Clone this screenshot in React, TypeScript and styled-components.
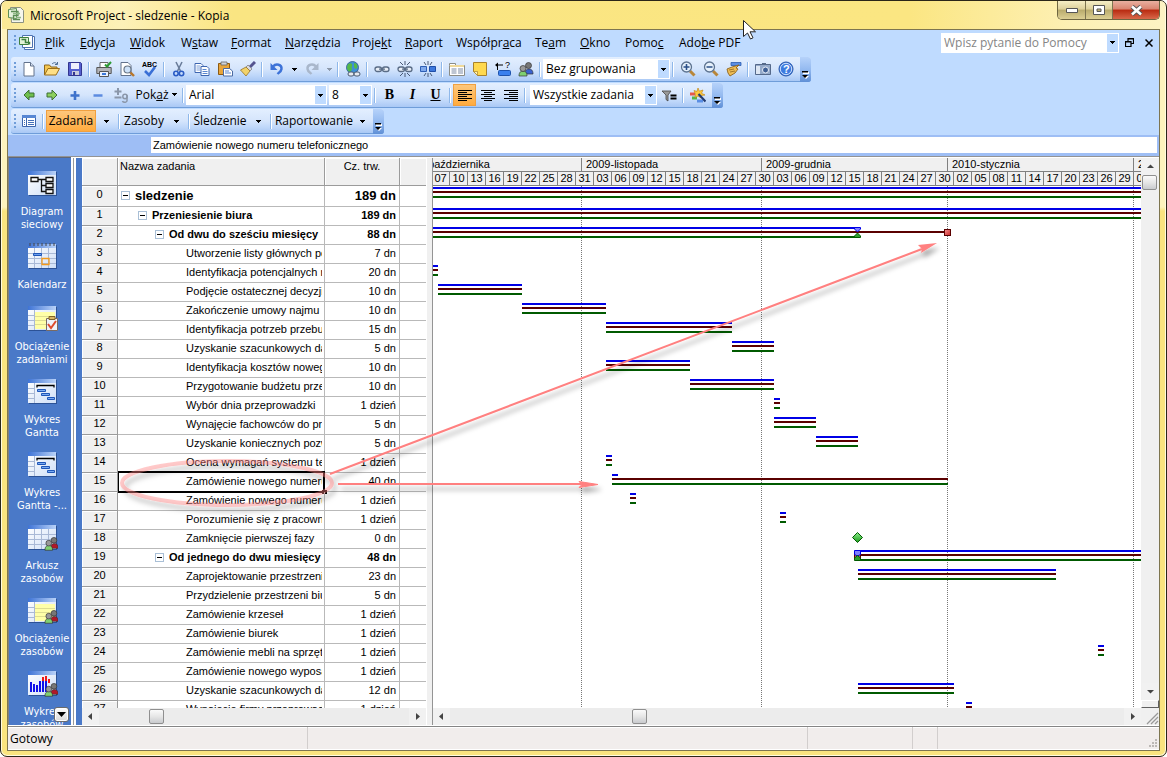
import React from "react";
import styled, { createGlobalStyle, css } from "styled-components";

const uiFont = `"Open Sans", "Noto Sans", sans-serif`;
const gridFont = `"Liberation Sans", Arial, sans-serif`;
const sideFont = `"DejaVu Sans Condensed", "DejaVu Sans", sans-serif`;

const GlobalStyle = createGlobalStyle`
  *, *::before, *::after { box-sizing: border-box; }
  body { margin: 0; background: #fff; font-family: ${uiFont}; font-size: 12px; color: #000; overflow: hidden; }
  button, input, select { font: inherit; color: inherit; margin: 0; padding: 0; border: 0; background: none; border-radius: 0; }
  svg { display: block; }
  u { text-underline-offset: 1px; }
`;

/* ---------- window ---------- */

const Window = styled.div`
  position: relative;
  display: flex;
  flex-direction: column;
  height: 100vh;
  padding: 0 6px 5px;
  border: 1px solid #2b2618;
  border-radius: 7px;
  overflow: hidden;
  background: linear-gradient(#fdf3bd 0, #fdf3bd 206px, #fae47f 210px);
  box-shadow: inset 0 0 0 1px #fffbe0;
`;

const TitleBar = styled.header`
  display: flex;
  flex: none;
  height: 28px;
  margin: 0 -5px;
  padding: 0 5px 0 6px;
  background: linear-gradient(90deg, #fbe995 0, #fdf1b8 120px, #fae582 230px, #fbe682 78%, #fdf0b4 92%, #fdf3c4);
`;

const WindowTitle = styled.h1`
  display: flex;
  align-items: center;
  gap: 6px;
  margin: 0;
  flex: 1;
  font-size: 12px;
  font-weight: 400;
  white-space: nowrap;
`;

const CaptionButtons = styled.div`
  display: flex;
  height: 19px;
  border: 1px solid #6f6640;
  border-top: 0;
  border-radius: 0 0 5px 5px;
  overflow: hidden;
`;

const CaptionButton = styled.button<{ $close?: boolean }>`
  display: flex;
  align-items: center;
  justify-content: center;
  width: ${(p) => (p.$close ? 47 : 27)}px;
  background: ${(p) =>
    p.$close
      ? "linear-gradient(#e9b0a0 0, #d98470 45%, #b92a10 50%, #d8684a)"
      : "linear-gradient(#f6eec6 0, #ddd09a 45%, #b9ab6c 50%, #dccf94)"};
  & + & { border-left: 1px solid #7d7450; }
`;

const Client = styled.div`
  display: flex;
  flex: 1;
  min-height: 0;
  flex-direction: column;
  border: 1px solid #7d7550;
  background: #bfdbff;
`;

/* ---------- menu and toolbars ---------- */

const MenuBar = styled.nav`
  display: flex;
  flex: none;
  align-items: center;
  height: 27px;
  padding: 0 0 2px 3px;
`;

const MenuIcon = styled.span`
  margin: 0 5px 0 2px;
`;

const MenuButton = styled.button<{ $w: number }>`
  width: ${(p) => p.$w}px;
  padding-left: 4px;
  text-align: left;
  white-space: nowrap;
`;

const HelpBox = styled.div`
  display: flex;
  width: 178px;
  height: 20px;
  margin-left: auto;
  border: 1px solid #fff;
  background: #fff;
`;

const HelpInput = styled.input`
  flex: 1;
  min-width: 0;
  padding-left: 2px;
  outline: none;
  &::placeholder { color: #858585; opacity: 1; }
`;

const HelpDrop = styled.button`
  display: flex;
  align-items: center;
  justify-content: center;
  width: 11px;
  background: #bfdbff;
`;

const DocButton = styled.button`
  display: flex;
  justify-content: center;
  width: 20px;
`;

const ToolRow = styled.div`
  display: flex;
  flex: none;
  height: 26px;
  padding-left: 3px;
`;

const Toolbar = styled.div`
  display: flex;
  align-items: center;
  height: 25px;
  border-radius: 3px;
  border-bottom: 1px solid #6f9dd9;
  background: linear-gradient(#e3efff 0, #d5e5fc 50%, #c0d8fa 75%, #a9c8f5);
`;

const Grip = styled.span`
  width: 6px;
  height: 15px;
  flex: none;
  background: linear-gradient(#6f9dd9 2px, transparent 2px) 3px 0 / 2px 4px repeat-y;
`;

const ToolButton = styled.button<{ $on?: boolean }>`
  display: flex;
  flex: none;
  align-items: center;
  justify-content: center;
  width: 23px;
  height: 22px;
  ${(p) => p.$on && css`
    border: 1px solid #f0a040;
    background: linear-gradient(#fdc77c, #ffab3f);
  `}
`;

const FormatTool = styled(ToolButton)`
  font-family: "Liberation Serif", serif;
  font-size: 14px;
  font-weight: 700;
`;

const TextTool = styled(ToolButton)<{ $w: number }>`
  width: ${(p) => p.$w}px;
  gap: 3px;
  padding-bottom: 1px;
  white-space: nowrap;
`;

const DropButton = styled(ToolButton)<{ $w?: number }>`
  width: ${(p) => p.$w ?? 12}px;
`;

const Sep = styled.span`
  flex: none;
  width: 6px;
  height: 15px;
  background: linear-gradient(90deg, transparent 2px, #8fb8ea 2px, #8fb8ea 3px, #fff 3px, #fff 4px, transparent 4px);
`;

const SelectWrap = styled.label<{ $w: number; $gap?: boolean }>`
  display: flex;
  position: relative;
  flex: none;
  width: ${(p) => p.$w}px;
  height: 20px;
  margin-left: ${(p) => (p.$gap ? 2 : 0)}px;
  border: 1px solid #fff;
  background: linear-gradient(90deg, #fff calc(100% - 11px), #bfdbff 0);
  select {
    width: 100%;
    padding: 0 12px 2px 2px;
    appearance: none;
    outline: none;
  }
  svg { position: absolute; right: 3px; top: 8px; pointer-events: none; }
`;

const MoreButton = styled.button`
  display: flex;
  align-items: flex-end;
  justify-content: center;
  align-self: stretch;
  width: 11px;
  height: 25px;
  margin-left: 3px;
  padding-bottom: 3px;
  border-radius: 0 3px 3px 0;
  background: linear-gradient(#b6d2fa, #94baf0 50%, #5f8fd6);
`;

const EntryBar = styled.div`
  display: flex;
  flex: none;
  height: 21px;
  padding: 2px 2px 3px 143px;
  background: #9ebef5;
`;

const EntryInput = styled.input`
  flex: 1;
  padding-left: 2px;
  outline: none;
  background: #fff;
  font-family: ${gridFont};
  font-size: 11px;
`;

/* ---------- body ---------- */

const Body = styled.main`
  display: flex;
  flex: 1;
  min-height: 0;
  border-top: 1px solid #949494;
  border-bottom: 1px solid #fff;
  background: #fff;
  padding-top: 1px;
`;

const Sidebar = styled.aside`
  position: relative;
  flex: none;
  width: 63px;
  margin-top: -1px;
  padding-top: 12px;
  overflow: hidden;
  border-left: 1px solid #808080;
  border-top: 1px solid #606878;
  background: #4a79c8;
`;

const ViewButton = styled.button`
  display: flex;
  flex-direction: column;
  align-items: center;
  gap: 8px;
  width: 66px;
  min-height: 62px;
  padding-bottom: 12px;
  color: #fff;
  font-family: ${sideFont};
  font-size: 11px;
  line-height: 13px;
  white-space: pre;
`;

const SidebarMore = styled.button`
  position: absolute;
  right: 2px;
  bottom: 3px;
  display: flex;
  align-items: center;
  justify-content: center;
  width: 15px;
  height: 15px;
  border: 1px solid #6b6b6b;
  border-radius: 3px;
  background: linear-gradient(#fff, #d9d9d9);
  box-shadow: inset 0 0 0 1px #fff;
`;

const Divider = styled.div`
  flex: none;
  width: 11px;
  background: linear-gradient(90deg, #fff 2px, #9a9a9a 2px, #9a9a9a 3px, #fff 3px, #fff 5px, #4a79c8 5px);
`;

const SheetPane = styled.section`
  display: flex;
  flex: none;
  flex-direction: column;
  width: 344px;
`;

const Clip = styled.div`
  flex: 1;
  min-height: 0;
  overflow: hidden;
`;

const Sheet = styled.table`
  width: 100%;
  table-layout: fixed;
  border-collapse: separate;
  border-spacing: 0;
  font-family: ${gridFont};
  font-size: 11px;
  line-height: 13px;
`;

const HeadCell = styled.th`
  height: 28px;
  padding: 2px 2px 0;
  vertical-align: top;
  font-weight: 400;
  border-right: 1px solid #9b9b9b;
  border-bottom: 1px solid #9b9b9b;
  background: #f0f0f0;
  box-shadow: inset 1px 1px 0 #fff;
  text-align: center;
  &:nth-child(2) { text-align: left; }
  &:last-child { border-right: 0; }
`;

const NumCell = styled.th`
  padding: 0 0 3px;
  font-weight: 400;
  border-right: 1px solid #9b9b9b;
  border-bottom: 1px solid #9b9b9b;
  background: #f0f0f0;
  box-shadow: inset 1px 1px 0 #fff;
`;

const Cell = styled.td`
  padding: 0 3px 1px 0;
  border-right: 1px solid #b9b9b9;
  border-bottom: 1px solid #b9b9b9;
  text-align: right;
  white-space: nowrap;
  &:last-child { border-right: 0; }
`;

const NameCell = styled(Cell)<{ $selected?: boolean }>`
  position: relative;
  padding: 0 2px 1px 0;
  text-align: left;
  ${(p) => p.$selected && css`
    &::before {
      content: "";
      position: absolute;
      inset: -2px -1px -2px 0;
      border: 2px solid #000;
      border-left-width: 1px;
    }
    &::after {
      content: "";
      position: absolute;
      right: -3px;
      bottom: -3px;
      width: 5px;
      height: 4px;
      background: #000;
    }
  `}
`;

const Row = styled.tr<{ $level: number }>`
  height: ${(p) => (p.$level === 0 ? 21 : 19)}px;
  ${Cell} {
    font-weight: ${(p) => (p.$level < 3 ? 700 : 400)};
    font-size: ${(p) => (p.$level === 0 ? 13 : 11)}px;
  }
`;

const Name = styled.div<{ $level: number }>`
  display: flex;
  align-items: center;
  gap: 5px;
  overflow: hidden;
  padding-left: ${(p) => (p.$level === 3 ? 68 : 3 + 17 * p.$level)}px;
`;

const Collapse = styled.button`
  flex: none;
  width: 9px;
  height: 9px;
  border: 1px solid #a9bfd6;
  background: linear-gradient(#000, #000) center / 5px 1px no-repeat #fff;
`;

const PaneGap = styled.div`
  flex: none;
  width: 7px;
  border-left: 1px solid #fff;
  border-right: 1px solid #949494;
  background: #f0f0f0;
`;

const GanttPane = styled.section`
  display: flex;
  flex: 1;
  min-width: 0;
  flex-direction: column;
`;

const ScaleRow = styled.div`
  display: flex;
  flex: none;
  height: 14px;
  overflow: hidden;
  border-bottom: 1px solid #808080;
  background: #f0f0f0;
  font-family: ${gridFont};
  font-size: 11px;
  line-height: 13px;
`;

const Month = styled.span<{ $w: number; $first?: boolean }>`
  flex: none;
  width: ${(p) => p.$w}px;
  padding-left: 4px;
  margin-left: ${(p) => (p.$first ? -37 : 0)}px;
  border-right: 1px solid #808080;
  white-space: nowrap;
`;

const Day = styled.span`
  flex: none;
  width: 18px;
  text-align: center;
  border-right: 1px solid #808080;
  &:first-child { margin-left: -1px; }
`;

const Chart = styled.svg`
  width: 100%;
  height: 100%;
`;

const HScroll = styled.div`
  display: flex;
  flex: none;
  align-items: center;
  height: 17px;
  background: #ececec;
`;

const ScrollArrow = styled.button`
  display: flex;
  flex: none;
  align-items: center;
  justify-content: center;
  width: 17px;
  height: 17px;
  background: #f1f1f1;
`;

const Thumb = styled.span<{ $x?: number }>`
  flex: none;
  width: 15px;
  height: 15px;
  margin: 0 auto 0 ${(p) => p.$x ?? 0}px;
  border: 1px solid #8f8f8f;
  border-radius: 2px;
  background: linear-gradient(#fafafa, #e6e6e6 50%, #c9cbce);
`;

const VScroll = styled.div`
  display: flex;
  flex: none;
  flex-direction: column;
  width: 18px;
  padding-left: 1px;
  background: #f0f0f0;
`;

const VFill = styled.span`
  flex: 1;
`;

const SplitBox = styled.span`
  height: 8px;
  margin-left: -1px;
  border: 1px solid #fff;
  border-right-color: #606060;
  border-bottom-color: #606060;
  background: #f0f0f0;
`;

const Corner = styled.span`
  display: flex;
  align-items: flex-end;
  justify-content: flex-end;
  height: 17px;
`;

const StatusBar = styled.footer`
  display: flex;
  flex: none;
  height: 24px;
  border-top: 1px solid #858585;
  border-bottom: 1px solid #fff;
  background: #f1edec;
  box-shadow: inset 0 1px 0 #fff;
`;

const StatusCell = styled.span<{ $w?: number }>`
  flex: ${(p) => (p.$w ? `0 0 ${p.$w}px` : 1)};
  padding: 3px 0 0 2px;
  border-right: 1px solid #d2cecd;
  &:last-child { border: 0; display: flex; justify-content: flex-end; align-items: flex-end; padding: 0 1px 1px 0; }
`;

const Annotations = styled.svg`
  position: absolute;
  left: -1px;
  top: -1px;
  width: 100%;
  height: 100%;
  pointer-events: none;
`;

/* ---------- small drawings ---------- */

const Caret = ({ c = "#000" }: { c?: string }) => (
  <svg width="5" height="3" shapeRendering="crispEdges"><path d="M0 0h5v1H4v1H3v1H2V2H1V1H0z" fill={c} /></svg>
);

const MoreMark = () => (
  <svg width="7" height="8">
    <path d="M1 1h6v2H1zM1 5h6L4 8z" fill="#fff" />
    <path d="M0 0h6v1.500H0zM0 4h6L3 7z" fill="#000" />
  </svg>
);

const ArrowMark = ({ d }: { d: "left" | "right" | "up" | "down" }) => {
  const paths = { left: "M6 1v7L2 4.500z", right: "M3 1v7l4-3.500z", up: "M1 6h7L4.500 2.500z", down: "M1 3h7L4.500 6.500z" };
  return <svg width="9" height="9"><path d={paths[d]} fill="#444" /></svg>;
};

const Icon = ({ children, w = 16 }: { children: React.ReactNode; w?: number }) => (
  <svg width={w} height="16" viewBox={`0 0 ${w} 16`}>{children}</svg>
);

const People = ({ red }: { red?: boolean }) => (
  <g stroke="#333" strokeWidth=".7">
    <path d="M7 13c0-4 2-5 4-5s4 1 4 5z" fill={red ? "#b01828" : "#3a62d0"} />
    <circle cx="10.500" cy="4.500" r="3" fill="#777" />
    <path d="M1 15c0-4 2-5 4-5s4 1 4 5z" fill="#7fd070" />
    <circle cx="5" cy="7.500" r="3" fill="#999" />
  </g>
);

const Chain = () => (
  <g fill="none" stroke="#5a6c86" strokeWidth="1.300">
    <rect x="1" y="6" width="6.500" height="4.500" rx="2.200" fill="#e8eef7" />
    <rect x="8.500" y="6" width="6.500" height="4.500" rx="2.200" fill="#e8eef7" />
    <path d="M5 8.200h6" />
  </g>
);

const Lens = ({ plus }: { plus?: boolean }) => (
  <g>
    <path d="M10 10l4.500 4.500" stroke="#b8863a" strokeWidth="3" />
    <circle cx="6.500" cy="6" r="5" fill="#e6f1fc" stroke="#5d7390" strokeWidth="1.300" />
    <path d={plus ? "M3.500 6h6M6.500 3v6" : "M3.500 6h6"} stroke="#2b4f88" strokeWidth="1.600" />
  </g>
);

const ic: Record<string, React.ReactNode> = {
  new: <Icon><path d="M3 1.500h6.500l3.500 3.500v10H3z" fill="#fff" stroke="#62728c" /><path d="M9.500 1.500V5H13" fill="#d7e2f2" stroke="#62728c" /></Icon>,
  open: <Icon><path d="M.5 14V4h5l1.500 2h6v3" fill="#f4c650" stroke="#8e671c" /><path d="M.5 14L4 7.500h11.500L12 14z" fill="#ffdf85" stroke="#9a6d18" /><path d="M8 3c2-2 4-1.500 5 0m.5-2v2.500H11" fill="none" stroke="#4d6c94" /></Icon>,
  save: <Icon><path d="M1.500 1.500h12l1 1v12h-13z" fill="#5560cf" stroke="#33358f" /><path d="M4 2h8v6H4z" fill="#eef0fc" /><path d="M5 10h7v4H5z" fill="#c9ccdb" /><path d="M6 11h2v3H6z" fill="#33358f" /></Icon>,
  print: <Icon><path d="M4 6V1.500h8V6" fill="#fff" stroke="#666" /><path d="M.8 6.500h14.400v6H.8z" fill="#b4b5ba" stroke="#555" /><path d="M3.500 10.500h9v5h-9z" fill="#e9f1ff" stroke="#555" /><path d="M9 3.500l2 2 4-4.500" fill="none" stroke="#2d9b34" strokeWidth="2" /><path d="M6 13h4" stroke="#3c78d8" strokeWidth="2" /></Icon>,
  preview: <Icon><path d="M2 1.500h7l3 3v10H2z" fill="#fff" stroke="#62728c" /><path d="M11 11l4 4" stroke="#b8762a" strokeWidth="2.400" /><circle cx="8.500" cy="8.500" r="3.500" fill="#cfe3fa" stroke="#6b7787" strokeWidth="1.200" /></Icon>,
  spell: <Icon w={18}><text x="1" y="6" fontSize="7" fontWeight="700" fontFamily="Liberation Sans">ABC</text><path d="M4 10l4 4 6-8" fill="none" stroke="#3a6fd6" strokeWidth="2.600" /></Icon>,
  cut: <Icon><path d="M5 1l4.500 9M11 1L6.500 10" stroke="#6c7f9c" strokeWidth="1.600" /><circle cx="5" cy="12.500" r="2.200" fill="none" stroke="#2b5cc4" strokeWidth="1.600" /><circle cx="10.500" cy="12.500" r="2.200" fill="none" stroke="#2b5cc4" strokeWidth="1.600" /></Icon>,
  copy: <Icon><path d="M1 2.500h6l2 2v7H1z" fill="#fff" stroke="#3e66b0" /><path d="M2.500 5h4M2.500 7h4M2.500 9h4" stroke="#7fa0d8" /><path d="M7 5.500h6l2 2v7H7z" fill="#fff" stroke="#3e66b0" /><path d="M8.500 8.500h4M8.500 10.500h5M8.500 12.500h5" stroke="#5a86d0" /></Icon>,
  paste: <Icon><path d="M1.500 2.500h11v11h-11z" fill="#e9a53a" stroke="#8d5b12" /><path d="M4 1h6v3H4z" fill="#cfd3da" stroke="#666" strokeWidth=".8" /><path d="M6.500 7.500h6l3 2.500v5h-9z" fill="#fff" stroke="#4c6ba3" /><path d="M8 10h4M8 12h6" stroke="#5a86d0" /></Icon>,
  brush: <Icon><path d="M15 1l-5 5" stroke="#54538f" strokeWidth="3" /><path d="M8 4l4 4-2 2-4-4z" fill="#d9d9df" stroke="#777" strokeWidth=".7" /><path d="M6 6l4 4-4 5L.5 9z" fill="#f2d269" stroke="#97752a" strokeWidth=".8" /></Icon>,
  undo: <Icon><path d="M4 5.500c3-3.500 9-2 8.500 2.500-.3 2.500-2.500 3.500-4 5" fill="none" stroke="#3c72d8" strokeWidth="2.400" /><path d="M1.500 2v7h7z" fill="#3c72d8" /></Icon>,
  redo: <Icon><path d="M12 5.500C9 2 3 3.500 3.500 8c.3 2.500 2.500 3.500 4 5" fill="none" stroke="#a9b7cb" strokeWidth="2.400" /><path d="M14.500 2v7h-7z" fill="#a9b7cb" /></Icon>,
  globe: <Icon><circle cx="7.500" cy="6.500" r="6" fill="#3e8fd4" stroke="#28548c" strokeWidth=".8" /><path d="M3 3c3-2 5 0 4 2s1 3-1 5-4-1-4-4zM9 2c3 0 4 3 3 5s-3 0-3-2z" fill="#54b948" /><g fill="#e4e9f0" stroke="#4c5b70"><rect x="3" y="11" width="6" height="4" rx="2" /><rect x="9" y="11" width="6" height="4" rx="2" /></g></Icon>,
  link: <Icon><Chain /></Icon>,
  unlink: <Icon><Chain /><path d="M8 0v4M3 1l3 3M13 1l-3 3M8 16v-4M3 15l3-3M13 15l-3-3" stroke="#3a4a66" strokeWidth=".9" /></Icon>,
  split: <Icon><path d="M.5 5.500h6v5h-6z" fill="#7fa9ec" stroke="#2f5fb5" /><path d="M9.500 5.500h6v5h-6z" fill="#3d78dc" stroke="#1f4ea8" /><path d="M8 0v4M4 1l2 3M12 1l-2 3M8 16v-4M4 15l2-3M12 15l-2-3" stroke="#3a4a66" strokeWidth=".9" /></Icon>,
  info: <Icon><path d="M.5 4.500v-2h6v2h9v10H.5z" fill="#fff" stroke="#8b8c86" /><path d="M1 4h14v2H1z" fill="#efd99a" /><path d="M2.500 8h5M2.500 10h5M2.500 12h5M9 8h5M9 10h5M9 12h5" stroke="#7c8ba5" /></Icon>,
  note: <Icon><path d="M1.500 1.500h13v13h-9l-4-4z" fill="#ffd94f" stroke="#a8822c" /><path d="M1.500 10.500l4 4v-4z" fill="#fff3b0" stroke="#a8822c" strokeWidth=".7" /></Icon>,
  assign: <Icon><path d="M3 4h5" stroke="#000" /><path d="M0 4l3-2.500v5z" /><path d="M2.500 4v5" stroke="#000" /><text x="10" y="7" fontSize="9" fontFamily="Liberation Sans">?</text><rect x="3.500" y="9.500" width="12" height="5" rx="1" fill="#3b80ee" stroke="#1f53ad" /></Icon>,
  people: <Icon><People /></Icon>,
  zoomIn: <Icon><Lens plus /></Icon>,
  zoomOut: <Icon><Lens /></Icon>,
  goto: <Icon><path d="M5 1.500h10v3H5z" fill="#5a8ee4" stroke="#2a5cae" strokeWidth=".8" /><path d="M1 8l5-2 7-2-3 3 2 1-3 4-5 3-2-3z" fill="#eebd54" stroke="#8f6420" strokeWidth=".9" /><path d="M3 9l5-1M4 11l5-1" stroke="#8f6420" strokeWidth=".8" /></Icon>,
  camera: <Icon><path d="M.5 3.500h15v10H.5z" fill="#94a9c9" stroke="#55698a" /><path d="M1 5h4v8H1z" fill="#dde6f3" /><circle cx="10.500" cy="9" r="3" fill="#3f5f94" stroke="#e8eef8" /><path d="M7 2h4v2H7z" fill="#55698a" /></Icon>,
  help: <Icon><circle cx="8" cy="8" r="7" fill="#3d7be0" stroke="#2a58ab" /><circle cx="8" cy="8" r="5.700" fill="none" stroke="#cfe0fb" /><text x="5" y="12" fontSize="11" fontWeight="700" fill="#fff" fontFamily="Liberation Sans">?</text></Icon>,
  left: <Icon><path d="M8 3L3 8l5 5v-3h5V6H8z" fill="#6fbf4d" stroke="#3d6f34" /></Icon>,
  right: <Icon><path d="M8 3l5 5-5 5v-3H3V6h5z" fill="#8ccf5e" stroke="#3d6f34" /></Icon>,
  plus: <Icon><path d="M8 4v9M3.500 8.500h9" stroke="#3e72cb" strokeWidth="2.600" /></Icon>,
  minus: <Icon><path d="M3.500 8.500h9" stroke="#5c8be0" strokeWidth="2.600" /></Icon>,
  sub: <Icon><path d="M5 1v7M1.500 4.500h7M1.500 10.500h7" stroke="#8b97aa" strokeWidth="2" /><circle cx="12" cy="9.500" r="2.200" fill="none" stroke="#8b97aa" strokeWidth="1.500" /><path d="M14 8v6c-1 2-4 1.500-4.500 0" fill="none" stroke="#8b97aa" strokeWidth="1.500" /></Icon>,
  alignL: <Icon><path d="M1 3.500h14M1 5.500h9M1 7.500h14M1 9.500h9M1 11.500h14M1 13.500h9" stroke="#000" /></Icon>,
  alignC: <Icon><path d="M1 3.500h14M4 5.500h8M1 7.500h14M4 9.500h8M1 11.500h14M4 13.500h8" stroke="#000" /></Icon>,
  alignR: <Icon><path d="M1 3.500h14M6 5.500h9M1 7.500h14M6 9.500h9M1 11.500h14M6 13.500h9" stroke="#000" /></Icon>,
  filter: <Icon><path d="M1 4h9L7 8v6l-2-1.500V8z" fill="#999" stroke="#444" strokeWidth=".8" /><path d="M9.500 8.500h6M9.500 11.500h6" stroke="#000" strokeWidth="1.800" /></Icon>,
  wizard: <Icon><path d="M0 5.500h5v3H0z" fill="#e65a4b" /><path d="M2 9.500h5v3H2z" fill="#55b54b" /><path d="M7 12.500h6v3H7z" fill="#5a8ee4" /><path d="M8 1l1.300 3.200L13 3l-1.500 3.300L15 8l-3.700.500L11 11 8 9l-3 1.500.500-3L4 3.500l3 1z" fill="#ffc93c" stroke="#c58b1a" strokeWidth=".7" /><path d="M8.500 7l7 7.500" stroke="#223a70" strokeWidth="2.200" /></Icon>,
  views: <Icon><path d="M1.500 2.500h13v11h-13z" fill="#fff" stroke="#3d66ad" /><path d="M1 2h14v3H1z" fill="#5787d4" /><path d="M5.500 5v8" stroke="#3d66ad" /><path d="M3 7.500h1M3 9.500h1M3 11.500h1M7 7.500h6M7 9.500h6M7 11.500h6" stroke="#4470b8" /></Icon>,
};

const ProjectLogo = () => (
  <svg width="16" height="16">
    <path d="M2.500.5h10l3 3v12h-12z" fill="#f6f6ee" stroke="#8b9180" />
    <path d="M.5 2.500l8-1v10l-8-1z" fill="#e6f2dc" stroke="#5f8f55" />
    <path d="M3 4.500h7v4H5.500v4H12" fill="none" stroke="#5c8c52" strokeWidth="1.300" />
    <path d="M5 6.500h7M8 10.500h5" stroke="#8fb884" strokeWidth="1.300" />
  </svg>
);

const DocLogo = () => (
  <svg width="17" height="17">
    <path d="M5.500 2.500h10v13h-10z" fill="#fff" stroke="#4d72b0" />
    <path d="M3.500 1.500h10v12h-10z" fill="#fff" stroke="#4d72b0" />
    <path d="M.5 3.500h9v7h-9z" fill="#e2f2d8" stroke="#3f8040" />
    <path d="M2.500 5.500h4v3h4v2" fill="none" stroke="#3f8040" strokeWidth="1.500" />
  </svg>
);

type ViewKind = "network" | "calendar" | "taskUsage" | "gantt" | "sheet" | "resUsage" | "graph";

const ViewIcon = ({ kind }: { kind: ViewKind }) => {
  const grid = kind === "calendar" || kind === "sheet";
  const usage = kind === "taskUsage" || kind === "resUsage";
  return (
    <svg width="32" height="27" viewBox="-1 0 32 27">
      <defs>
        <linearGradient id="cap"><stop stopColor="#3f74d6" /><stop offset="1" stopColor="#b9d2f8" /></linearGradient>
        <linearGradient id="page" x2="1" y2="1"><stop stopColor="#fff" /><stop offset="1" stopColor="#cfdff7" /></linearGradient>
      </defs>
      <path d="M2 2h28v24H2z" fill="#2c5296" />
      <path d="M1 1h28v24H1z" fill="url(#page)" />
      <path d="M1 1h28v4H1z" fill="url(#cap)" />
      {kind === "network" && (
        <g fill="#fff" stroke="#111" strokeWidth="1.300">
          <path d="M11 9.500h8M14.500 9.500v12H19M14.500 15.500H19" fill="none" />
          <path d="M4 7.500h7v4H4zM19 7.500h7v4h-7zM19 13.500h7v4h-7zM19 19.500h7v4h-7z" />
        </g>
      )}
      {grid && <path d="M1 10.500h28M1 15.500h28M1 20.500h28M7.500 5v20M14.500 5v20M21.500 5v20" stroke="#a9b9d6" />}
      {(usage || kind === "gantt") && <path d="M7.500 5v20M1 10.500h6M1 15.500h6M1 20.500h6" stroke="#a9b9d6" />}
      {usage && <path d="M8 7h20v17H8z" fill="#ffffa8" />}
      {usage && <path d="M8 11.500h20M8 15.500h20M8 19.500h20" stroke="#dedd92" />}
      {kind === "calendar" && (
        <g fill="none">
          <path d="M3 0v3M7 0v3M11 0v3M15 0v3M19 0v3M23 0v3M27 0v3" stroke="#444" />
          <path d="M6.500 10.500h8v2h-8z" fill="#6ca0ee" stroke="#1f56b8" />
          <path d="M15 15.500h7v6h-7z" stroke="#f49a1c" strokeWidth="1.300" />
        </g>
      )}
      {kind === "gantt" && (
        <g>
          <path d="M10 9.500V7.500h17v2" fill="none" stroke="#000" strokeWidth="1.300" />
          <path d="M10.500 11.500h8v2h-8zM14.500 15.500h8v2h-8zM20.500 19.500h7v2h-7z" fill="#7aabf2" stroke="#1f56b8" />
        </g>
      )}
      {kind === "graph" && (
        <g>
          <path d="M3 12h2v10H3zM6 14h2v8H6zM9 15h2v7H9zM12 11h2v11h-2zM15 10h2v12h-2zM18 10h2v12h-2z" fill="#1010e8" />
          <path d="M15 7h2v4h-2zM18 6h2v5h-2zM21 9h2v4h-2z" fill="#f01818" />
        </g>
      )}
      {kind === "taskUsage" && (
        <g>
          <path d="M19.500 13.500h11v12h-11z" fill="#eef2fa" stroke="#7a6a62" />
          <path d="M22 11.500h6v3h-6z" fill="#d9b765" stroke="#806425" />
          <path d="M21 19l3 4 5-7" fill="none" stroke="#dd4a2d" strokeWidth="2" />
        </g>
      )}
      {(kind === "sheet" || kind === "resUsage" || kind === "graph") && (
        <g transform="translate(17 12) scale(.95)"><People red /></g>
      )}
    </svg>
  );
};

/* ---------- data ---------- */

const menus: [string, number][] = [
  ["_Plik", 35], ["_Edycja", 50], ["_Widok", 51], ["W_staw", 50], ["_Format", 54], ["_Narzędzia", 67], ["Proje_kt", 53],
  ["_Raport", 51], ["Współpr_aca", 79], ["Te_am", 45], ["_Okno", 45], ["Pomo_c", 54], ["Ado_be PDF", 70],
];

const Mnemonic = ({ text }: { text: string }) => {
  const i = text.indexOf("_");
  return <span>{text.slice(0, i)}<u>{text[i + 1]}</u>{text.slice(i + 2)}</span>;
};

const views: [ViewKind, string][] = [
  ["network", "Diagram\nsieciowy"], ["calendar", "Kalendarz"], ["taskUsage", "Obciążenie\nzadaniami"], ["gantt", "Wykres\nGantta"],
  ["gantt", "Wykres\nGantta -..."], ["sheet", "Arkusz\nzasobów"], ["resUsage", "Obciążenie\nzasobów"], ["graph", "Wykres\nzasobów"],
];

const tasks: [string, string, number?][] = [
  ["sledzenie", "189 dn", 0],
  ["Przeniesienie biura", "189 dn", 1],
  ["Od dwu do sześciu miesięcy", "88 dn", 2],
  ["Utworzenie listy głównych potrzeb", "7 dn"],
  ["Identyfikacja potencjalnych miejsc", "20 dn"],
  ["Podjęcie ostatecznej decyzji o", "10 dn"],
  ["Zakończenie umowy najmu pomieszczeń", "10 dn"],
  ["Identyfikacja potrzeb przebudowy", "15 dn"],
  ["Uzyskanie szacunkowych danych", "5 dn"],
  ["Identyfikacja kosztów nowego", "10 dn"],
  ["Przygotowanie budżetu przeprowadzki", "10 dn"],
  ["Wybór dnia przeprowadzki", "1 dzień"],
  ["Wynajęcie fachowców do prac", "5 dn"],
  ["Uzyskanie koniecznych pozwoleń", "5 dn"],
  ["Ocena wymagań systemu telefonicznego", "1 dzień"],
  ["Zamówienie nowego numeru telefonicznego", "40 dn"],
  ["Zamówienie nowego numeru faksu", "1 dzień"],
  ["Porozumienie się z pracownikami", "1 dzień"],
  ["Zamknięcie pierwszej fazy", "0 dn"],
  ["Od jednego do dwu miesięcy", "48 dn", 2],
  ["Zaprojektowanie przestrzeni", "23 dn"],
  ["Przydzielenie przestrzeni biurowej", "5 dn"],
  ["Zamówienie krzeseł", "1 dzień"],
  ["Zamówienie biurek", "1 dzień"],
  ["Zamówienie mebli na sprzęt", "1 dzień"],
  ["Zamówienie nowego wyposażenia", "1 dzień"],
  ["Uzyskanie szacunkowych danych", "12 dn"],
  ["Wynajęcie firmy przeprowadzkowej", "1 dzień"],
];

const FAR = 4000;
/* [row, start, end of the first bar, end of the other two] */
const bars: [number, number, number, number?][] = [
  [0, 0, FAR], [1, 0, FAR], [2, 0, 427], [4, 0, 5], [5, 5, 89], [6, 89, 173], [7, 173, 299], [8, 299, 341],
  [9, 173, 257], [10, 257, 341], [11, 341, 347], [12, 341, 383], [13, 383, 425], [14, 173, 179], [15, 179, 185, 515],
  [16, 197, 203], [17, 347, 353], [19, 422, FAR], [20, 425, 623], [24, 665, 671], [26, 425, 521], [27, 533, 539],
];
const rowTop = (row: number) => (row === 0 ? 0 : 21 + 19 * (row - 1));

const months: [string, number][] = [
  ["2009-października", 186], ["2009-listopada", 180], ["2009-grudnia", 186], ["2010-stycznia", 186], ["2010-lutego", 168],
];
const days = ("07 10 13 16 19 22 25 28 31 03 06 09 12 15 18 21 24 27 30 03 06 09 12 15 18 21 24 27 30 " +
  "02 05 08 11 14 17 20 23 26 29 01 04 07 10 13 16 19 22 25").split(" ");

/* ---------- sections ---------- */

const Tools = ({ names }: { names: string[] }) => (
  <>
    {names.map((n, i) => (n === "|" ? <Sep key={i} /> : <ToolButton key={i} aria-label={n}>{ic[n]}</ToolButton>))}
  </>
);

const Combo = ({ label, value, w, gap }: { label: string; value: string; w: number; gap?: boolean }) => (
  <SelectWrap $w={w} $gap={gap}>
    <select aria-label={label} defaultValue={value}><option>{value}</option></select>
    <Caret />
  </SelectWrap>
);

const GanttChart = () => (
  <Chart>
    <defs>
      <linearGradient id="gem" x2="0" y2="1"><stop stopColor="#8cf08c" /><stop offset="1" stopColor="#1c9a1c" /></linearGradient>
      <linearGradient id="end" x2="1" y2="1"><stop stopColor="#f59090" /><stop offset="1" stopColor="#c82828" /></linearGradient>
    </defs>
    {[148, 328, 514, 700].map((x) => (
      <line key={x} x1={x + 0.5} x2={x + 0.5} y1="0" y2="100%" stroke="#777" strokeDasharray="1 1" />
    ))}
    {bars.map(([row, a, b, c]) => {
      const y = rowTop(row);
      return (
        <g key={row} shapeRendering="crispEdges">
          <rect x={a} y={y + 1} width={b - a} height="2" fill="#0000e6" />
          <rect x={a} y={y + 5} width={(c ?? b) - a} height="2" fill="#5a0000" />
          <rect x={a} y={y + 10} width={(c ?? b) - a} height="2" fill="#005a00" />
        </g>
      );
    })}
    <rect x="427" y={rowTop(2) + 5} width="84" height="2" fill="#5a0000" />
    <g transform={`translate(421 ${rowTop(2) + 1})`}>
      <path d="M.5.5h6v1.500L3.500 5 .5 2z" fill="#8080ff" stroke="#0000e6" />
      <path d="M.5 10.500V9l3-3 3 3v1.500z" fill="#2ea02e" stroke="#005a00" />
    </g>
    <rect x="511.500" y={rowTop(2) + 3.5} width="6" height="6" fill="url(#end)" stroke="#5a0000" />
    <path d={`M424.500 ${rowTop(18) + 2.5}l5 5-5 5-5-5z`} fill="url(#gem)" stroke="#005a00" />
    <g transform={`translate(421 ${rowTop(19) + 1})`}>
      <path d="M.5 3v6h6V3z" fill="#e07070" stroke="#5a0000" />
      <path d="M.5.5h6v4l-3 1.500-3-1.500z" fill="#8080ff" stroke="#0000e6" />
      <path d="M.5 10.500V8l3-2.500 3 2.500v2.500z" fill="#2ea02e" stroke="#005a00" />
    </g>
  </Chart>
);

export default function App() {
  return (
    <Window>
      <GlobalStyle />
      <TitleBar>
        <WindowTitle><ProjectLogo />Microsoft Project - sledzenie - Kopia</WindowTitle>
        <CaptionButtons>
          <CaptionButton aria-label="Minimalizuj"><svg width="12" height="5"><path d="M.5.5h11v4H.5z" fill="#fff" stroke="#555" /></svg></CaptionButton>
          <CaptionButton aria-label="Przywróć"><svg width="12" height="10"><path d="M.5.5h11v9H.5zM4 4v2.500h4V4z" fill="#fff" stroke="#555" fillRule="evenodd" /></svg></CaptionButton>
          <CaptionButton $close aria-label="Zamknij"><svg width="13" height="11"><path d="M2 1.500l9 8M11 1.500l-9 8" stroke="#555" strokeWidth="4.500" /><path d="M2 1.500l9 8M11 1.500l-9 8" stroke="#fff" strokeWidth="2.600" /></svg></CaptionButton>
        </CaptionButtons>
      </TitleBar>

      <Client>
        <MenuBar>
          <Grip />
          <MenuIcon><DocLogo /></MenuIcon>
          {menus.map(([t, w]) => <MenuButton key={t} $w={w}><Mnemonic text={t} /></MenuButton>)}
          <HelpBox>
            <HelpInput aria-label="Pomoc" placeholder="Wpisz pytanie do Pomocy" />
            <HelpDrop aria-label="Lista pytań"><Caret /></HelpDrop>
          </HelpBox>
          <DocButton aria-label="Przywróć okno"><svg width="9" height="9"><path d="M3 3V.5h5.500v5H6M3 1h5.500M.5 3.500H6v5H.5zM.5 4H6" fill="none" stroke="#000" strokeWidth="1.200" /></svg></DocButton>
          <DocButton aria-label="Zamknij okno"><svg width="8" height="8"><path d="M.5.5l7 7M7.500.5l-7 7" stroke="#000" strokeWidth="1.500" /></svg></DocButton>
        </MenuBar>

        <ToolRow>
          <Toolbar>
            <Grip />
            <Tools names={["new", "open", "save", "|", "print", "preview", "spell", "|", "cut", "copy", "paste", "brush", "|", "undo"]} />
            <DropButton aria-label="Cofnij"><Caret /></DropButton>
            <Tools names={["redo"]} />
            <DropButton aria-label="Ponów"><Caret c="#8d99ab" /></DropButton>
            <Tools names={["|", "globe", "|", "link", "unlink", "split", "|", "info", "note", "assign", "people", "|"]} />
            <Combo label="Grupowanie" value="Bez grupowania" w={127} />
            <Tools names={["|", "zoomIn", "zoomOut", "goto", "|", "camera", "help"]} />
            <MoreButton aria-label="Opcje paska"><MoreMark /></MoreButton>
          </Toolbar>
        </ToolRow>

        <ToolRow>
          <Toolbar>
            <Grip />
            <Tools names={["left", "right", "plus", "minus", "sub"]} />
            <TextTool $w={48}><Mnemonic text="Pok_aż" /><Caret /></TextTool>
            <Sep />
            <Combo label="Czcionka" value="Arial" w={141} />
            <Combo label="Rozmiar" value="8" w={43} gap />
            <Sep />
            <FormatTool><b>B</b></FormatTool>
            <FormatTool><i>I</i></FormatTool>
            <FormatTool><u>U</u></FormatTool>
            <Sep />
            <ToolButton $on aria-label="Do lewej">{ic.alignL}</ToolButton>
            <Tools names={["alignC", "alignR", "|"]} />
            <Combo label="Filtr" value="Wszystkie zadania" w={127} gap />
            <Tools names={["filter", "|", "wizard"]} />
            <MoreButton aria-label="Opcje paska"><MoreMark /></MoreButton>
          </Toolbar>
        </ToolRow>

        <ToolRow>
          <Toolbar>
            <Grip />
            <Tools names={["views", "|"]} />
            <TextTool $w={50} $on>Zadania</TextTool>
            <DropButton $w={20} aria-label="Zadania"><Caret /></DropButton>
            <Sep />
            <TextTool $w={44}>Zasoby</TextTool>
            <DropButton $w={20} aria-label="Zasoby"><Caret /></DropButton>
            <Sep />
            <TextTool $w={56}>Śledzenie</TextTool>
            <DropButton $w={20} aria-label="Śledzenie"><Caret /></DropButton>
            <Sep />
            <TextTool $w={80}>Raportowanie</TextTool>
            <DropButton $w={16} aria-label="Raportowanie"><Caret /></DropButton>
            <MoreButton aria-label="Opcje paska"><MoreMark /></MoreButton>
          </Toolbar>
        </ToolRow>

        <EntryBar>
          <EntryInput aria-label="Wpis" defaultValue="Zamówienie nowego numeru telefonicznego" />
        </EntryBar>

        <Body>
          <Sidebar>
            {views.map(([kind, label], i) => (
              <ViewButton key={i}><ViewIcon kind={kind} /><span>{label}</span></ViewButton>
            ))}
            <SidebarMore aria-label="Więcej widoków"><svg width="9" height="5"><path d="M0 0h9L4.500 5z" /></svg></SidebarMore>
          </Sidebar>
          <Divider />

          <SheetPane>
            <Clip>
              <Sheet>
                <colgroup><col width="36" /><col width="207" /><col width="75" /><col width="26" /></colgroup>
                <thead>
                  <tr><HeadCell /><HeadCell scope="col">Nazwa zadania</HeadCell><HeadCell scope="col">Cz. trw.</HeadCell><HeadCell /></tr>
                </thead>
                <tbody>
                  {tasks.map(([name, dur, level = 3], i) => (
                    <Row key={i} $level={level}>
                      <NumCell scope="row">{i}</NumCell>
                      <NameCell $selected={i === 15}>
                        <Name $level={level}>{level < 3 && <Collapse aria-label="Zwiń" />}{name}</Name>
                      </NameCell>
                      <Cell>{dur}</Cell>
                      <Cell />
                    </Row>
                  ))}
                </tbody>
              </Sheet>
            </Clip>
            <HScroll>
              <ScrollArrow aria-label="W lewo"><ArrowMark d="left" /></ScrollArrow>
              <Thumb $x={50} />
              <ScrollArrow aria-label="W prawo"><ArrowMark d="right" /></ScrollArrow>
            </HScroll>
          </SheetPane>
          <PaneGap />

          <GanttPane>
            <ScaleRow>{months.map(([m, w], i) => <Month key={m} $w={w} $first={i === 0}>{m}</Month>)}</ScaleRow>
            <ScaleRow>{days.map((d, i) => <Day key={i}>{d}</Day>)}</ScaleRow>
            <Clip><GanttChart /></Clip>
            <HScroll>
              <ScrollArrow aria-label="W lewo"><ArrowMark d="left" /></ScrollArrow>
              <Thumb $x={182} />
              <ScrollArrow aria-label="W prawo"><ArrowMark d="right" /></ScrollArrow>
            </HScroll>
          </GanttPane>

          <VScroll>
            <ScrollArrow aria-label="W górę"><ArrowMark d="up" /></ScrollArrow>
            <Thumb />
            <VFill />
            <ScrollArrow aria-label="W dół"><ArrowMark d="down" /></ScrollArrow>
            <SplitBox />
            <Corner><svg width="13" height="13"><path d="M1 12L12 1M5 12l7-7M9 12l3-3" stroke="#999" strokeWidth="1.300" /></svg></Corner>
          </VScroll>
        </Body>

        <StatusBar>
          <StatusCell $w={300}>Gotowy</StatusCell>
          <StatusCell />
          <StatusCell $w={105} />
          <StatusCell $w={25} />
          <StatusCell $w={221}>
            <svg width="9" height="9"><path d="M6 0h2v2H6zM3 3h2v2H3zM6 3h2v2H6zM0 6h2v2H0zM3 6h2v2H3zM6 6h2v2H6z" fill="#bcb8b5" /></svg>
          </StatusCell>
        </StatusBar>
      </Client>

      <Annotations>
        <defs>
          <filter id="soft" x="-20%" y="-20%" width="140%" height="160%">
            <feDropShadow dx="3" dy="5" stdDeviation="2.500" floodColor="#000" floodOpacity=".35" />
          </filter>
          <filter id="softRing" x="-20%" y="-20%" width="140%" height="160%">
            <feDropShadow dx="3" dy="5" stdDeviation="2.500" floodColor="#000" floodOpacity=".5" />
          </filter>
        </defs>
        <g filter="url(#softRing)">
          <ellipse cx="227" cy="483" rx="105" ry="22" fill="none" stroke="#ff8080" strokeOpacity=".42" strokeWidth="4" />
        </g>
        <g filter="url(#soft)" stroke="#ff8080" fill="#ff8080">
          <path d="M330 474L922 249" strokeWidth="2" />
          <path d="M937 243l-19 2 4 4-1 4z" stroke="none" />
          <path d="M338 484h244v-1h1v1z" strokeWidth="2" />
          <path d="M598 484.500l-19-3 3 3-3 3z" stroke="#ff8080" strokeWidth="1" />
        </g>
        <path d="M743.500 20.500v16l4-3.500 3 6 2.500-1.200-3-6h5.500z" fill="#fff" stroke="#222" />
      </Annotations>
    </Window>
  );
}
